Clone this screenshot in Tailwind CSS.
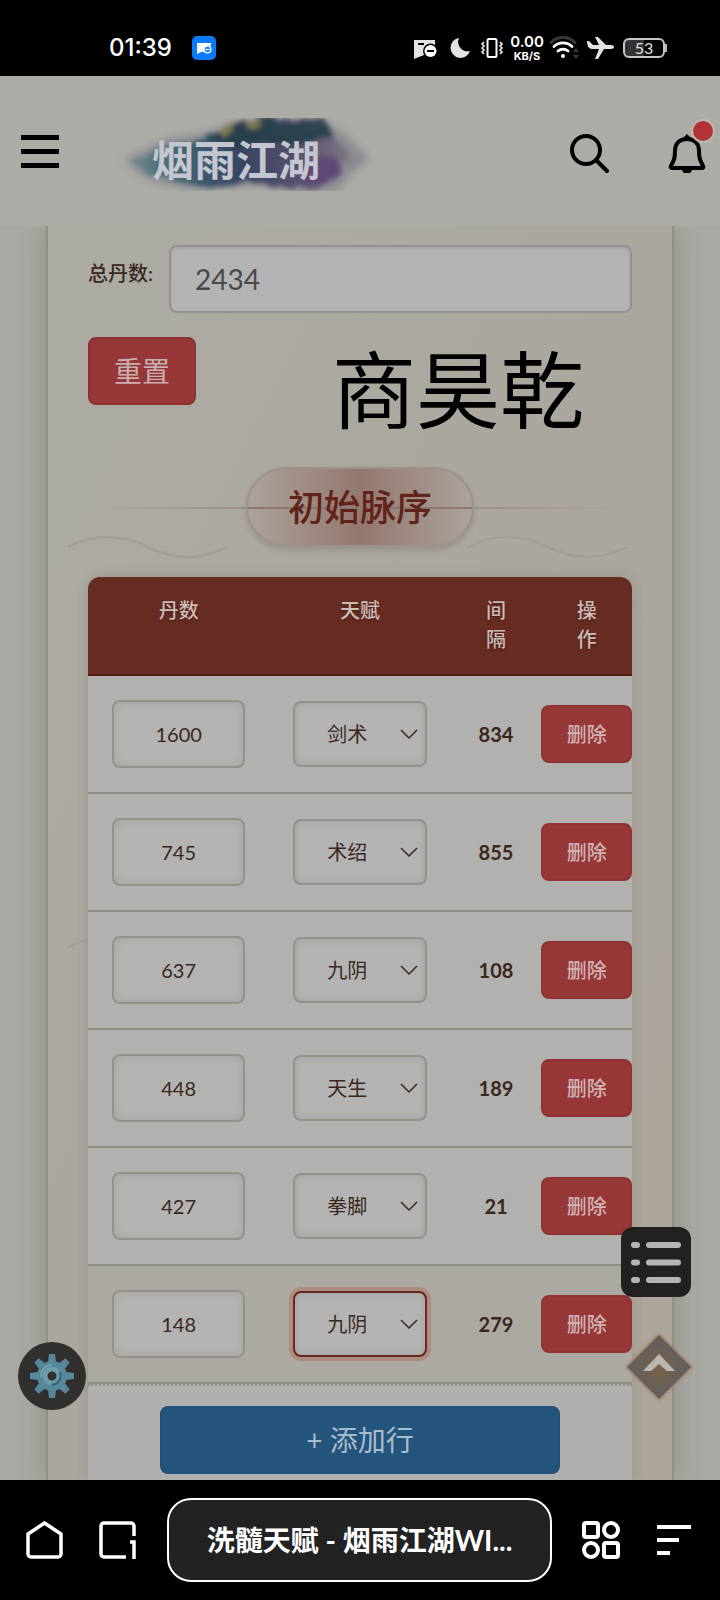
<!DOCTYPE html>
<html lang="zh-CN">
<head>
<meta charset="utf-8">
<meta name="viewport" content="width=device-width, initial-scale=1">
<title>洗髓天赋 - 烟雨江湖WIKI</title>
<script src="https://cdn.jsdelivr.net/npm/@tailwindcss/browser@4"></script>
</head>
<body class="bg-black font-['Lato','Noto_Sans_CJK_SC',sans-serif] text-[#3a281e]">
<div class="relative flex min-h-screen flex-col">

  <!-- Status bar -->
  <div class="flex h-[76px] items-end justify-between bg-black pr-[53px] pb-3 pl-[109px] text-white">
    <div class="flex h-8 items-center gap-5">
      <span class="font-['Inter','Noto_Sans_CJK_SC',sans-serif] text-2xl font-medium">01:39</span>
      <svg class="size-6" viewBox="0 0 24 24"><rect width="24" height="24" rx="5" fill="#0a7bfa"/><path d="M5 7h14v3a5 5 0 0 0-7 6H9l-4 2z" fill="#fff"/><circle cx="15.500" cy="13.500" r="3.400" fill="#0a7bfa" stroke="#fff" stroke-width="1.300"/><path d="M13.500 13.500h4" stroke="#fff" stroke-width="1.300"/></svg>
    </div>
    <div class="flex h-8 items-center gap-1">
      <svg class="size-6" viewBox="0 0 24 24"><path d="M1 4h21v15H11l-10 4z" fill="#e3e3e3"/><path d="M5 8h6" stroke="#000" stroke-width="2"/><circle cx="17.500" cy="15" r="7.500"/><circle cx="17.500" cy="15" r="6" fill="#fff"/><path d="M14 15h7" stroke="#000" stroke-width="2"/></svg>
      <svg class="ml-2 size-6" viewBox="0 0 24 24"><path d="M10 2a10 10 0 1 0 11 13A9.500 9.500 0 0 1 10 2z" fill="#e3e3e3"/></svg>
      <svg class="ml-1 size-6" viewBox="0 0 24 24" fill="none" stroke="#fff"><rect x="6.500" y="3" width="9" height="18" rx="1.500" stroke-width="2"/><path d="M3 6L1 8l2 2-2 2 2 2-2 2 2 2M19 6l2 2-2 2 2 2-2 2 2 2-2 2" stroke-width="1.500"/></svg>
      <span class="flex w-9 flex-col items-center text-center font-['Inter',sans-serif]"><span class="text-[15px] leading-[17px] font-semibold">0.00</span><span class="text-[11px] leading-[13px] font-bold">KB/S</span></span>
      <svg class="h-7 w-[30px]" viewBox="0 0 30 28" fill="none" stroke-linecap="round"><path d="M2 8.500a17 17 0 0 1 24 0" stroke="#363636" stroke-width="3"/><path d="M5 12.500a13 13 0 0 1 18 0M9 17a8 8 0 0 1 10 0" stroke="#fff" stroke-width="2.800"/><circle cx="14" cy="22" r="2" fill="#fff"/><path d="M24 18l3-4 3 4zM24 21l3 4 3-4z" fill="#363636"/></svg>
      <svg class="ml-1 h-6 w-[28px]" viewBox="0 0 28 24"><path d="M0 5l2 0 4 4h6L8 1h3l8 8h5c2 0 3 1 3 2s-1 2-3 2h-7l-6 10H8l4-10H5c-3 0-5-3-5-8z" fill="#e3e3e3"/></svg>
      <span class="ml-1 flex items-center"><span class="flex h-5 w-[42px] items-center justify-center rounded-md border-2 border-[#c7c7c7] bg-linear-to-r from-[#343434] from-50% to-black to-50% text-base leading-4 text-[#e0e0e0]">53</span><span class="h-2 w-0.5 bg-[#b5b5b5]"></span></span>
    </div>
  </div>

  <!-- Site header -->
  <header class="flex h-[150px] items-center bg-[#acaba5] pr-[13px] pl-[21px]">
    <button type="button" aria-label="菜单" class="flex w-[38px] flex-col gap-[9px]"><span class="h-[5px] bg-black"></span><span class="h-[5px] bg-black"></span><span class="h-[5px] bg-black"></span></button>
    <a href="#" aria-label="烟雨江湖" class="ml-[58px] block pt-2">
      <svg class="h-[76px] w-[256px]" viewBox="0 0 256 76">
        <defs>
          <linearGradient id="ink" x1="0" x2="1"><stop offset="0" stop-color="#6f8a8e"/><stop offset=".2" stop-color="#3b626f"/><stop offset=".5" stop-color="#303f5e"/><stop offset=".75" stop-color="#51476c"/><stop offset="1" stop-color="#7d7780"/></linearGradient>
          <filter id="soft" filterUnits="userSpaceOnUse" x="-10" y="-10" width="276" height="96"><feTurbulence type="fractalNoise" baseFrequency=".05" numOctaves="4" seed="4" result="n"/><feDisplacementMap in="SourceGraphic" in2="n" scale="14" xChannelSelector="R" yChannelSelector="G"/><feGaussianBlur stdDeviation="2.500"/></filter>
          <filter id="haze" x="-20%" y="-30%" width="140%" height="160%"><feGaussianBlur stdDeviation="5"/></filter>
          <clipPath id="crop"><path d="M0 1h256v73H0z"/></clipPath>
        </defs>
        <g clip-path="url(#crop)">
          <path d="M8 42L52 22 92 16 118 5H208L226 16 252 42 232 58 222 74H170L145 68 70 72 30 62z" fill="#6f7282" opacity=".6" filter="url(#haze)"/>
          <g filter="url(#soft)">
            <path d="M12 45L48 30 85 24 108 12 140 1H204L216 20 234 40 220 54 206 68 185 72 150 66 80 68 42 60z" fill="url(#ink)" opacity=".9"/>
            <path d="M88 24l20-12 34-8h62l12 14-30 9H115z" fill="#263f49" opacity=".85"/>
            <path d="M190 44l28-7 8 18-14 12-28-4z" fill="#5f4a76"/>
            <path d="M104 9h11v8h-11zM130 4h14v6h-14z" fill="#7f7a4c"/>
          </g>
        </g>
        <text x="35" y="59" fill="#c3c5cf" font-size="42" font-weight="700" font-family="Noto Sans CJK SC, sans-serif">烟雨江湖</text>
      </svg>
    </a>
    <button type="button" aria-label="搜索" class="ml-auto pt-1"><svg class="size-11" viewBox="0 0 44 44" fill="none" stroke="#000" stroke-width="4" stroke-linecap="round"><circle cx="20" cy="19" r="14"/><path d="M30 29l11 11"/></svg></button>
    <button type="button" aria-label="通知" class="relative ml-[57px] pt-1"><svg class="size-10" viewBox="0 0 40 40"><path d="M20 6C12 6 8 11 8 18c0 7-1 9-4 15-1 1 0 2 1 2h30c1 0 2-1 1-2-3-6-4-8-4-15 0-7-4-12-12-12z" fill="none" stroke="#000" stroke-width="4"/><path d="M15 6l5-5 5 5zM15 36h10a5 5 0 0 1-10 0" fill="#000"/></svg><span class="absolute -top-2.5 -right-2 size-6 rounded-full border-2 border-[#bdb8b3] bg-[#b13335]"></span></button>
  </header>

  <!-- Page body -->
  <main class="relative grow overflow-hidden bg-[#a9a9a4] px-[46px]">
    <div class="h-full border-x-2 border-[#908f82] bg-linear-to-br from-[#acaba4] via-[#aba79f] to-[#aba59b] px-10 pt-[19px] shadow-[0_0_24px_rgba(60,60,50,0.25)]">
      <div class="flex gap-4">
        <label for="total" class="pt-[14px] text-xl leading-7 font-medium whitespace-nowrap">总丹数:</label>
        <input id="total" value="2434" class="h-[68px] min-w-0 grow rounded-lg border-2 border-[#929294] bg-[#b3b3b4] px-6 text-[28px] text-[#48484a] shadow-[inset_0_2px_3px_rgba(0,0,0,0.08)]">
      </div>
      <div class="mt-6 flex items-start justify-between pr-[48px]">
        <button type="button" class="h-[68px] w-[108px] rounded-lg border-2 border-[#8c3234] bg-[#973737] text-[28px] text-[#c9aeb0]">重置</button>
        <span class="text-[84px] leading-[106px] text-black">商昊乾</span>
      </div>

      <div class="relative mt-6 flex justify-center">
        <svg class="absolute top-[68px] -left-5 h-6 w-40" viewBox="0 0 160 24" fill="none" stroke="#a19d97" stroke-width="2"><path d="M0 12Q40-8 80 12T160 12"/></svg>
        <svg class="absolute top-[68px] right-1 h-6 w-40" viewBox="0 0 160 24" fill="none" stroke="#a19d97" stroke-width="2"><path d="M0 12Q40-8 80 12T160 12"/></svg>
        <h2 class="relative flex h-[80px] w-[228px] items-center justify-center rounded-full border-2 border-[#9c928a] bg-linear-to-r from-[#aaa39c] via-[#94776f] to-[#aaa39c] text-4xl font-medium text-[#61231a] shadow-[0_3px_6px_rgba(0,0,0,0.14)]"><span class="absolute inset-x-0 top-[38px] h-0.5 bg-[#8b7870]"></span><span class="relative">初始脉序</span></h2>
        <span class="absolute top-[40px] left-3 h-0.5 w-[146px] bg-linear-to-r from-transparent to-[#999189]"></span>
        <span class="absolute top-[40px] right-3 h-0.5 w-[146px] bg-linear-to-l from-transparent to-[#999189]"></span>
      </div>

      <div class="mt-[30px] overflow-hidden rounded-t-xl bg-[#b1b0ae] shadow-[0_0_12px_rgba(80,70,50,0.2)]">
        <table class="w-full table-fixed text-center text-xl">
          <colgroup><col class="w-1/3"><col class="w-1/3"><col class="w-1/6"><col class="w-1/6"></colgroup>
          <thead>
            <tr class="h-[98px] border-b-2 border-[#50170f] bg-[#672c22] align-top leading-[29px] text-[#cbbbb7] text-shadow-md">
              <th class="px-6 pt-[19px] font-medium">丹数</th><th class="px-6 pt-[19px] font-medium">天赋</th><th class="px-8 pt-[19px] font-medium">间隔</th><th class="px-8 pt-[19px] font-medium">操作</th>
            </tr>
          </thead>
          <tbody id="rows"></tbody>
        </table>
        <div class="flex justify-center border-t-2 border-dotted border-[#918e86] pt-5 pb-[6px]">
          <button type="button" class="h-[68px] w-[400px] rounded-lg border-2 border-[#224f76] bg-[#24557d] text-[28px] text-[#a9bdcc]">+ 添加行</button>
        </div>
      </div>
    </div>

    <svg class="absolute top-[710px] left-[68px] h-4 w-5" viewBox="0 0 20 16" fill="none" stroke="#a19d97" stroke-width="2"><path d="M0 12Q10 6 20 4"/></svg>

    <button type="button" aria-label="设置" class="absolute bottom-[70px] left-[18px] flex size-[68px] items-center justify-center rounded-full bg-[#31302e]">
      <svg class="size-11" viewBox="0 0 44 44"><g fill="#56879a"><circle cx="22" cy="22" r="15"/><path id="tooth" d="M18 8l1-8h6l1 8zM18 36l1 8h6l1-8z"/><use href="#tooth" transform="rotate(45 22 22)"/><use href="#tooth" transform="rotate(90 22 22)"/><use href="#tooth" transform="rotate(135 22 22)"/></g><path d="M11 23a11 11 0 0 1 11-12" fill="none" stroke="#6ea3b2" stroke-width="2"/><circle cx="22" cy="22" r="7" fill="#31302e" stroke="#6a9cab" stroke-width="5"/><path d="M29.500 18a8.500 8.500 0 0 1-8 12.500" fill="none" stroke="#2c687b" stroke-width="2"/></svg>
    </button>
    <button type="button" aria-label="目录" class="absolute right-[29px] bottom-[183px] rounded-xl bg-[#22211f]">
      <svg class="size-[70px]" viewBox="0 0 70 70" stroke="#b5b4b0" stroke-width="6" stroke-linecap="round"><path d="M13 18h3M28 18h29M13 35.500h3M28 35.500h29M13 53h3M28 53h29"/></svg>
    </button>
    <button type="button" aria-label="返回顶部" class="absolute right-[26px] bottom-[78px]">
      <svg class="size-[70px]" viewBox="0 0 70 70"><defs><radialGradient id="glow"><stop offset="0" stop-color="#7a6248"/><stop offset=".7" stop-color="#65605b"/></radialGradient><filter id="halo"><feGaussianBlur stdDeviation="1.500"/></filter></defs><path d="M35 1l34 34-34 34L1 35z" fill="#a57d6d" filter="url(#halo)"/><path d="M35 3l32 32-32 32L3 35z" fill="url(#glow)"/><path d="M19 39l16-17 16 17h-8l-8-7-8 7z" fill="#b9b7b4"/></svg>
    </button>
  </main>

  <!-- Browser toolbar -->
  <nav class="flex h-[120px] items-center bg-black px-6 text-white">
    <button type="button" aria-label="主页"><svg class="size-10" viewBox="0 0 40 40" fill="none" stroke="#fff" stroke-width="3.500" stroke-linejoin="round"><path d="M4 14L20.500 3 37 14v20a3 3 0 0 1-3 3H7a3 3 0 0 1-3-3z"/></svg></button>
    <button type="button" aria-label="标签页" class="ml-[34px]"><svg class="size-10" viewBox="0 0 40 40" fill="none" stroke="#fff" stroke-width="3.500"><path d="M28 37H6a3 3 0 0 1-3-3V6a3 3 0 0 1 3-3h27a3 3 0 0 1 3 3v10M32 22h4v17"/></svg></button>
    <button type="button" class="ml-[29px] h-[84px] min-w-0 grow truncate rounded-3xl border-2 border-white bg-[#222] px-9 text-[28px] font-bold">洗髓天赋 - 烟雨江湖WI...</button>
    <button type="button" aria-label="应用" class="ml-[29px]"><svg class="size-10" viewBox="0 0 40 40" fill="none" stroke="#fff" stroke-width="4"><rect x="3" y="3" width="14" height="14" rx="2"/><circle cx="30" cy="10" r="7"/><circle cx="10" cy="30" r="7"/><rect x="23" y="23" width="14" height="14" rx="2"/></svg></button>
    <button type="button" aria-label="更多" class="mr-1 ml-[31px]"><svg class="size-10" viewBox="0 0 40 40" stroke="#fff" stroke-width="4"><path d="M5 7h34M5 20h22M5 33h13"/></svg></button>
  </nav>
</div>

<script>
  const data = [[1600, '剑术', 834], [745, '术绍', 855], [637, '九阴', 108], [448, '天生', 189], [427, '拳脚', 21], [148, '九阴', 279]];
  document.getElementById('rows').innerHTML = data.map(([n, talent, gap], i) => {
    const active = i === 5;
    return `<tr class="h-[118px] border-b-2 border-[#8f8f86] ${active ? 'bg-[#aba9a2]' : 'bg-[#b1b1af]'}">
      <td class="px-6"><input aria-label="丹数 ${i + 1}" value="${n}" class="block h-[68px] w-full rounded-lg border-2 border-[#949288] bg-[#b3b3b2] text-center shadow-[inset_0_0_8px_rgba(0,0,0,0.1)]"></td>
      <td class="px-6"><div class="relative"><select aria-label="天赋 ${i + 1}" class="block h-[66px] w-full appearance-none rounded-lg border-2 bg-[#b3b3b3] pl-8 shadow-[inset_0_0_8px_rgba(0,0,0,0.1)] ${active ? 'border-[#682820] ring-4 ring-[#af8b82]' : 'border-[#949288]'}"><option>${talent}</option></select><svg class="pointer-events-none absolute top-1/2 right-2 h-4 w-5 -translate-y-1/2" viewBox="0 0 20 16" fill="none" stroke="#3a281e" stroke-width="1.500"><path d="M2 4l8 8 8-8"/></svg></div></td>
      <td class="font-bold">${gap}</td>
      <td><button type="button" class="block h-[58px] w-full rounded-lg border-2 border-[#8f3334] bg-[#973737] font-medium text-[#cfb2b3]">删除</button></td>
    </tr>`;
  }).join('');
</script>
</body>
</html>
